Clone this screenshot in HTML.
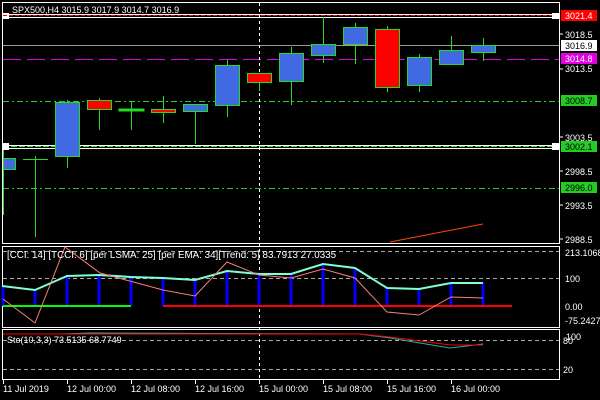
<!DOCTYPE html>
<html><head><meta charset="utf-8"><style>
html,body{margin:0;padding:0;background:#000;width:600px;height:400px;overflow:hidden}
svg{display:block}
text{font-family:"Liberation Sans",sans-serif;font-size:9px;fill:#fff}
</style></head><body>
<svg width="600" height="400" viewBox="0 0 600 400" xmlns="http://www.w3.org/2000/svg">
<rect width="600" height="400" fill="#000"/>
<rect x="2.5" y="2.5" width="557" height="241" fill="none" stroke="#fff" stroke-width="1"/>
<rect x="2.5" y="246.5" width="557" height="81" fill="none" stroke="#fff" stroke-width="1"/>
<rect x="2.5" y="329.5" width="557" height="50" fill="none" stroke="#fff" stroke-width="1"/>
<line x1="3" y1="14.5" x2="559" y2="14.5" stroke="#fff"/>
<line x1="3" y1="15.5" x2="559" y2="15.5" stroke="#f00" stroke-dasharray="4,2"/>
<line x1="3" y1="17.5" x2="559" y2="17.5" stroke="#fff"/>
<line x1="3" y1="45.5" x2="559" y2="45.5" stroke="#999"/>
<line x1="3" y1="59.5" x2="559" y2="59.5" stroke="#e000e0" stroke-dasharray="18,6"/>
<line x1="3" y1="101.5" x2="559" y2="101.5" stroke="#2c2" stroke-dasharray="6,3,2,3"/>
<line x1="3" y1="145.5" x2="559" y2="145.5" stroke="#fff"/>
<line x1="3" y1="146.5" x2="559" y2="146.5" stroke="#2e2" stroke-dasharray="6,2"/>
<line x1="3" y1="148.5" x2="559" y2="148.5" stroke="#fff"/>
<line x1="3" y1="188.5" x2="559" y2="188.5" stroke="#2c2" stroke-dasharray="6,3,2,3"/>
<line x1="259.5" y1="3" x2="259.5" y2="379" stroke="#fff" stroke-dasharray="3,3"/>
<rect x="2" y="13" width="7" height="6" fill="#fff"/><rect x="3" y="15" width="4" height="1" fill="#f00"/>
<rect x="2" y="143" width="7" height="7" fill="#fff"/>
<rect x="552" y="13" width="7" height="6" fill="#fff"/>
<rect x="552" y="143" width="7" height="7" fill="#fff"/>
<text x="12" y="13">SPX500,H4  3015.9 3017.9 3014.7 3016.9</text>
<g stroke="#22dd22" stroke-width="1">
<line x1="3.5" y1="150" x2="3.5" y2="215"/>
<rect x="3.5" y="158.5" width="12" height="11" fill="#4169e1"/>
<line x1="35.5" y1="156" x2="35.5" y2="237"/><line x1="23" y1="159.5" x2="48" y2="159.5"/>
<line x1="67.5" y1="100" x2="67.5" y2="168"/><rect x="55.5" y="102.5" width="24" height="54" fill="#4169e1"/>
<line x1="99.5" y1="98" x2="99.5" y2="130"/><rect x="87.5" y="100.5" width="24" height="9" fill="#f00"/>
<line x1="131.5" y1="101" x2="131.5" y2="130"/><rect x="119" y="109" width="25" height="2" fill="#22dd22"/>
<line x1="163.5" y1="96" x2="163.5" y2="123"/><rect x="151.5" y="109.5" width="24" height="3" fill="#f00"/>
<line x1="195.5" y1="104" x2="195.5" y2="144"/><rect x="183.5" y="104.5" width="24" height="7" fill="#4169e1"/>
<line x1="227.5" y1="60" x2="227.5" y2="117"/><rect x="215.5" y="65.5" width="24" height="40" fill="#4169e1"/>
<line x1="259.5" y1="73" x2="259.5" y2="91"/><rect x="247.5" y="73.5" width="24" height="9" fill="#f00"/>
<line x1="291.5" y1="47" x2="291.5" y2="105"/><rect x="279.5" y="53.5" width="24" height="28" fill="#4169e1"/>
<line x1="323.5" y1="17" x2="323.5" y2="63"/><rect x="311.5" y="44.5" width="24" height="11" fill="#4169e1"/>
<line x1="355.5" y1="23" x2="355.5" y2="64"/><rect x="343.5" y="27.5" width="24" height="17" fill="#4169e1"/>
<line x1="387.5" y1="26" x2="387.5" y2="92"/><rect x="375.5" y="29.5" width="24" height="58" fill="#f00"/>
<line x1="419.5" y1="54" x2="419.5" y2="92"/><rect x="407.5" y="57.5" width="24" height="28" fill="#4169e1"/>
<line x1="451.5" y1="36" x2="451.5" y2="64"/><rect x="439.5" y="50.5" width="24" height="14" fill="#4169e1"/>
<line x1="483.5" y1="38" x2="483.5" y2="61"/><rect x="471.5" y="45.5" width="24" height="7" fill="#4169e1"/>
</g>
<polyline points="390,242 483,224" fill="none" stroke="#ff4500" stroke-width="1"/>
<g>
<rect x="561" y="10" width="36" height="11" fill="#f00"/><text x="565" y="19">3021.4</text>
<text x="565" y="38">3018.5</text>
<rect x="561" y="40" width="36" height="11" fill="#fff"/><text x="565" y="49" style="fill:#000">3016.9</text>
<rect x="561" y="53" width="36" height="11" fill="#e000e0"/><text x="565" y="62">3014.8</text>
<text x="565" y="72">3013.5</text>
<rect x="561" y="95" width="36" height="11" fill="#2c2"/><text x="565" y="104" style="fill:#000">3008.7</text>
<text x="565" y="141">3003.5</text>
<rect x="561" y="141" width="36" height="11" fill="#2c2"/><text x="565" y="150" style="fill:#000">3002.1</text>
<text x="565" y="175">2998.5</text>
<rect x="561" y="182" width="36" height="11" fill="#2c2"/><text x="565" y="191" style="fill:#000">2996.0</text>
<text x="565" y="209">2993.5</text>
<text x="565" y="243">2988.5</text>
</g>
<g stroke="#fff"><line x1="560" y1="34" x2="563" y2="34"/><line x1="560" y1="69" x2="563" y2="69"/><line x1="560" y1="137" x2="563" y2="137"/><line x1="560" y1="171" x2="563" y2="171"/><line x1="560" y1="205" x2="563" y2="205"/><line x1="560" y1="239" x2="563" y2="239"/></g>
<line x1="3" y1="251.5" x2="559" y2="251.5" stroke="#aaa" stroke-dasharray="4,3"/>
<line x1="3" y1="278.5" x2="559" y2="278.5" stroke="#aaa" stroke-dasharray="4,3"/>
<g stroke="#0000ff" stroke-width="3">
<line x1="3" y1="306" x2="3" y2="286"/><line x1="35" y1="306" x2="35" y2="290"/><line x1="67" y1="306" x2="67" y2="276"/><line x1="99" y1="306" x2="99" y2="275"/><line x1="131" y1="306" x2="131" y2="277"/><line x1="163" y1="306" x2="163" y2="278"/><line x1="195" y1="306" x2="195" y2="280"/><line x1="227" y1="306" x2="227" y2="271"/><line x1="259" y1="306" x2="259" y2="274"/><line x1="291" y1="306" x2="291" y2="274"/><line x1="323" y1="306" x2="323" y2="264"/><line x1="355" y1="306" x2="355" y2="268"/><line x1="387" y1="306" x2="387" y2="288"/><line x1="419" y1="306" x2="419" y2="289"/><line x1="451" y1="306" x2="451" y2="283"/><line x1="483" y1="306" x2="483" y2="283"/>
</g>
<line x1="3" y1="306" x2="131" y2="306" stroke="#0f0" stroke-width="2"/>
<line x1="163" y1="306" x2="512" y2="306" stroke="#f00" stroke-width="2"/>
<polyline points="2,286 35,290 67,276 99,275 131,277 163,278 195,280 227,271 259,274 291,274 323,264 355,268 387,288 419,289 451,283 483,283" fill="none" stroke="#7fffd4" stroke-width="2"/>
<polyline points="3,299 35,323 65,247 100,273 163,290 195,296 227,262 259,275 291,278 323,269 355,278 387,312 419,315 451,297 483,298" fill="none" stroke="#fa8072" stroke-width="1"/>
<text x="7" y="258" style="font-size:9.8px">[CCI: 14] [TCCI: 6] [per LSMA: 25] [per EMA: 34][Trend: 5]  83.7913 27.0335</text>
<text x="565" y="256">213.1068</text>
<text x="565" y="282">100</text>
<text x="565" y="310">0.00</text>
<text x="565" y="324">-75.2427</text>
<line x1="3" y1="340.5" x2="559" y2="340.5" stroke="#aaa" stroke-dasharray="4,3"/>
<line x1="3" y1="369.5" x2="559" y2="369.5" stroke="#aaa" stroke-dasharray="4,3"/>
<polyline points="3,334 60,334 90,333 360,334 390,338 420,343 450,348 483,344" fill="none" stroke="#20b2aa" stroke-width="1"/>
<polyline points="3,334 360,334 390,337 420,341 450,345 483,345" fill="none" stroke="#f00" stroke-width="1"/>
<text x="7" y="343">Sto(10,3,3) 73.5135 68.7749</text>
<text x="563" y="344">80</text><text x="566" y="340">100</text>
<text x="563" y="373">20</text>
<g stroke="#fff"><line x1="3.5" y1="380" x2="3.5" y2="384"/><line x1="67.5" y1="380" x2="67.5" y2="384"/><line x1="131.5" y1="380" x2="131.5" y2="384"/><line x1="195.5" y1="380" x2="195.5" y2="384"/><line x1="259.5" y1="380" x2="259.5" y2="384"/><line x1="323.5" y1="380" x2="323.5" y2="384"/><line x1="387.5" y1="380" x2="387.5" y2="384"/><line x1="451.5" y1="380" x2="451.5" y2="384"/></g>
<text x="3" y="392">11 Jul 2019</text>
<text x="67" y="392">12 Jul 00:00</text>
<text x="131" y="392">12 Jul 08:00</text>
<text x="195" y="392">12 Jul 16:00</text>
<text x="259" y="392">15 Jul 00:00</text>
<text x="323" y="392">15 Jul 08:00</text>
<text x="387" y="392">15 Jul 16:00</text>
<text x="451" y="392">16 Jul 00:00</text>
</svg>
</body></html>
